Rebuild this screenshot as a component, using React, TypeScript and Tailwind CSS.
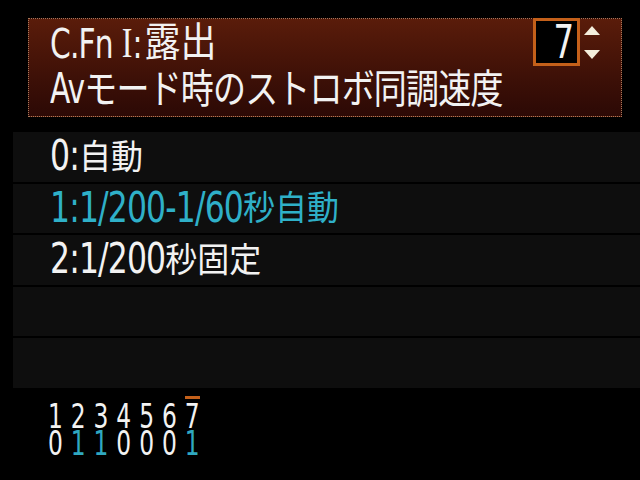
import React from "react";

const FONT = {
  fontFamily: '"DejaVu Sans Condensed", "Noto Sans CJK JP", sans-serif',
};

// Splits a label into latin and CJK runs so each can be sized like the camera font
function Txt({
  text,
  latin,
  cjk,
}: {
  text: string;
  latin: string;
  cjk: string;
}) {
  const runs = text.match(/[\x00-\x7f]+|[^\x00-\x7f]+/g) || [];
  return (
    <>
      {runs.map((r, i) =>
        /^[\x00-\x7f]/.test(r) ? (
          <span key={i} className={`inline-block ${latin}`}>
            {r}
          </span>
        ) : (
          <span key={i} className={`inline-block ${cjk}`}>
            {r}
          </span>
        )
      )}
    </>
  );
}

const options = [
  { label: "0:自動", active: false },
  { label: "1:1/200-1/60秒自動", active: true },
  { label: "2:1/200秒固定", active: false },
  { label: "", active: false },
  { label: "", active: false },
];

const top = ["1", "2", "3", "4", "5", "6", "7"];
const bottom = ["0", "1", "1", "0", "0", "0", "1"];

export default function App() {
  return (
    <div
      className="w-[640px] h-[480px] bg-black text-[#f2f2f2] overflow-hidden flex flex-col"
      style={FONT}
    >
      {/* Header */}
      <div className="pl-[28px] pr-[18px] pt-[18px]">
        <div className="relative h-[99px] border border-dotted border-[#a8785a] bg-gradient-to-b from-[#5a1c0a] to-[#2c0905] pl-[21px] flex flex-col">
          <div className="h-[46px] flex items-center pt-[2px] leading-none">
            <span className="inline-block text-[33px] scale-y-[1.25] tracking-tight">C.Fn</span>
            <span
              className="inline-block text-[32px] scale-y-[1.3] ml-[9px]"
              style={{ fontFamily: '"Liberation Serif", serif' }}
            >
              I
            </span>
            <span className="inline-block text-[33px] scale-y-[1.25]">:</span>
            <span className="inline-block text-[36px] scale-y-[1.1] ml-[2px]">露出</span>
          </div>
          <div className="h-[46px] flex items-center leading-none text-[33px] tracking-tight">
            <Txt
              text="Avモード時のストロボ同調速度"
              latin="scale-y-[1.3]"
              cjk="scale-y-[1.22]"
            />
          </div>
          <div className="absolute left-[504px] -top-[1px] flex items-start gap-[4px]">
            <div className="w-[47px] h-[48px] border-[3px] border-[#c4601a] bg-black flex items-center justify-end pr-[3px] leading-none">
              <span className="inline-block text-[36px] scale-y-[1.3]">7</span>
            </div>
            <div className="flex flex-col gap-[15px] pt-[8px]">
              <svg width="16" height="9" viewBox="0 0 16 9">
                <polygon points="8,0 16,9 0,9" fill="#f4eedc" />
              </svg>
              <svg width="16" height="9" viewBox="0 0 16 9">
                <polygon points="0,0 16,0 8,9" fill="#f4eedc" />
              </svg>
            </div>
          </div>
        </div>
      </div>

      {/* Options list */}
      <div className="ml-[13px] mt-[15px] flex flex-col gap-[2px]">
        {options.map((o, i) => (
          <div
            key={i}
            className={`h-[49.5px] bg-[#0e0e0e] pl-[37px] flex items-center leading-none text-[32px] ${
              o.active ? "text-[#2fb0c8]" : "text-[#f2f2f2]"
            }`}
          >
            <Txt
              text={o.label}
              latin="text-[35px] tracking-tight scale-y-[1.2]"
              cjk="scale-y-[1.08]"
            />
          </div>
        ))}
      </div>

      {/* Status digits */}
      <div className="pl-[44px] mt-[8px] flex">
        {top.map((t, i) => (
          <div key={i} className="w-[22.8px] flex flex-col items-center">
            <div
              className={`w-[15px] h-[3px] ${i === 6 ? "bg-[#c4601a]" : "bg-transparent"}`}
            />
            <div className="h-[27px] mt-[4px] flex items-center leading-none">
              <span className="inline-block text-[26px] font-medium scale-y-[1.28]">{t}</span>
            </div>
            <div className="h-[27px] flex items-center leading-none">
              <span
                className={`inline-block text-[26px] font-medium scale-y-[1.28] ${
                  bottom[i] === "1" ? "text-[#2fa8c0]" : "text-[#f2f2f2]"
                }`}
              >
                {bottom[i]}
              </span>
            </div>
          </div>
        ))}
      </div>
    </div>
  );
}
